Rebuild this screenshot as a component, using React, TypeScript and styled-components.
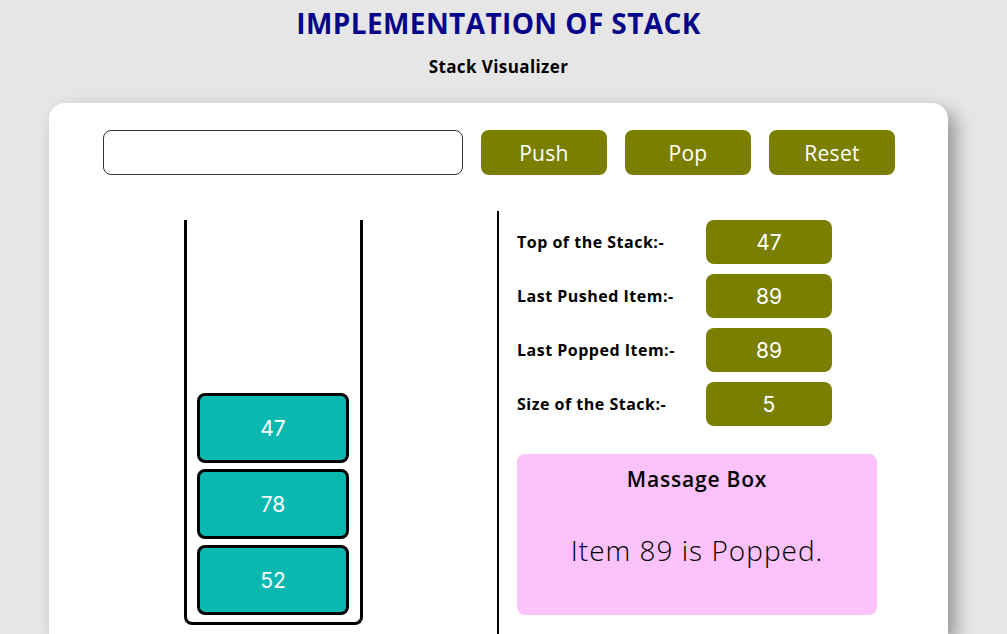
import { FC } from 'react';
import styled, { createGlobalStyle } from 'styled-components';

const stackItems = [47, 78, 52];

const stats = [
	{ label: 'Top of the Stack:-', value: '47' },
	{ label: 'Last Pushed Item:-', value: '89' },
	{ label: 'Last Popped Item:-', value: '89' },
	{ label: 'Size of the Stack:-', value: '5' },
];

const App: FC = () => {
	return (
		<>
			<GlobalStyle />
			<Page>
				<Title>IMPLEMENTATION OF STACK</Title>
				<Subtitle>Stack Visualizer</Subtitle>
				<Card>
					<Controls>
						<ValueInput type="text" />
						<ActionButton>Push</ActionButton>
						<ActionButton>Pop</ActionButton>
						<ActionButton>Reset</ActionButton>
					</Controls>
					<Body>
						<StackColumn>
							<StackTube>
								{stackItems.map((item) => (
									<StackItem key={item}>{item}</StackItem>
								))}
							</StackTube>
						</StackColumn>
						<InfoColumn>
							{stats.map((s) => (
								<StatRow key={s.label}>
									<StatLabel>{s.label}</StatLabel>
									<StatValue>{s.value}</StatValue>
								</StatRow>
							))}
							<MessageBox>
								<MessageTitle>Massage Box</MessageTitle>
								<MessageText>Item 89 is Popped.</MessageText>
							</MessageBox>
						</InfoColumn>
					</Body>
				</Card>
			</Page>
		</>
	);
};

export default App;

const GlobalStyle = createGlobalStyle`
	html, body {
		margin: 0;
		padding: 0;
		background: #e6e6e6;
		overflow: hidden;
	}
	body {
		font-family: 'Open Sans', 'Noto Sans', sans-serif;
	}
`;

const Page = styled.div`
	width: 997px;
	height: 634px;
	overflow: hidden;
	display: flex;
	flex-direction: column;
	align-items: center;
`;

const Title = styled.h1`
	margin: 5px 0 0;
	font-size: 28px;
	font-weight: 700;
	letter-spacing: 0.4px;
	color: #06068a;
	line-height: 36px;
`;

const Subtitle = styled.h3`
	margin: 15px 0 0;
	font-size: 17px;
	font-weight: 700;
	letter-spacing: 0.4px;
	color: #000;
	line-height: 22px;
`;

const Card = styled.div`
	margin-top: 25px;
	width: 899px;
	box-sizing: border-box;
	background: #fff;
	border-radius: 16px 16px 0 0;
	box-shadow: 8px 8px 18px rgba(0, 0, 0, 0.35);
	padding-top: 27px;
	height: 531px;
	flex-shrink: 0;
`;

const Controls = styled.div`
	display: flex;
	gap: 18px;
	padding-left: 54px;
`;

const ValueInput = styled.input`
	width: 360px;
	height: 45px;
	box-sizing: border-box;
	border: 1px solid #333;
	border-radius: 8px;
	outline: none;
	font-size: 18px;
	padding: 0 12px;
`;

const ActionButton = styled.button`
	width: 126px;
	height: 45px;
	border: none;
	border-radius: 8px;
	background: #7a7f00;
	color: #fff;
	font-family: 'Open Sans', sans-serif;
	font-size: 21px;
	letter-spacing: 0.3px;
	cursor: pointer;
`;

const Body = styled.div`
	display: grid;
	grid-template-columns: 448px 1fr;
	margin-top: 36px;
`;

const StackColumn = styled.div`
	display: flex;
	justify-content: center;
	padding-top: 9px;
`;

const StackTube = styled.div`
	width: 179px;
	height: 405px;
	box-sizing: border-box;
	border: 3px solid #000;
	border-top: none;
	border-radius: 0 0 8px 8px;
	display: flex;
	flex-direction: column;
	justify-content: flex-end;
	align-items: center;
	gap: 6px;
	padding-bottom: 7px;
`;

const StackItem = styled.div`
	width: 152px;
	height: 70px;
	box-sizing: border-box;
	border: 3px solid #000;
	border-radius: 8px;
	background: #0ab8b0;
	color: #fff;
	font-family: Inter, sans-serif;
	font-size: 21px;
	display: flex;
	align-items: center;
	justify-content: center;
`;

const InfoColumn = styled.div`
	border-left: 2px solid #000;
	padding: 9px 0 0 18px;
	height: 423px;
	box-sizing: border-box;
	display: flex;
	flex-direction: column;
	gap: 10px;
`;

const StatRow = styled.div`
	display: flex;
	align-items: center;
`;

const StatLabel = styled.div`
	width: 189px;
	font-size: 16px;
	font-weight: 700;
	letter-spacing: 0.5px;
	color: #000;
`;

const StatValue = styled.div`
	width: 126px;
	height: 44px;
	border-radius: 8px;
	background: #7a7f00;
	color: #fff;
	font-family: Inter, sans-serif;
	font-size: 21px;
	display: flex;
	align-items: center;
	justify-content: center;
`;

const MessageBox = styled.div`
	margin-top: 18px;
	width: 360px;
	height: 161px;
	flex-shrink: 0;
	border-radius: 8px;
	background: #fcc2fc;
	display: flex;
	flex-direction: column;
	align-items: center;
`;

const MessageTitle = styled.div`
	margin-top: 11px;
	font-size: 21px;
	font-weight: 600;
	letter-spacing: 0.8px;
	color: #000;
`;

const MessageText = styled.div`
	margin-top: 38px;
	font-size: 28px;
	font-weight: 300;
	letter-spacing: 1px;
	color: #000;
`;
